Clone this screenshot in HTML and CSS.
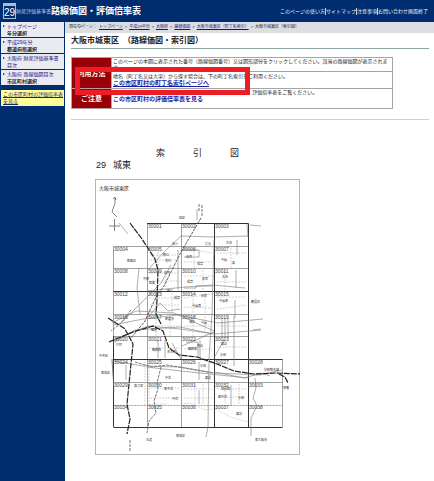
FILE: index.html
```html
<!DOCTYPE html>
<html lang="ja">
<head>
<meta charset="utf-8">
<meta name="viewport" content="width=device-width, initial-scale=1">
<title>大阪市城東区（路線価図・索引図）</title>
<link rel="stylesheet" href="styles.css">
</head>
<body>
<header class="top">
  <div class="brand">
    <span class="year">29</span>
    <span class="series">財産評価基準書</span>
    <span class="name">路線価図・評価倍率表</span>
  </div>
  <nav class="tools">
    <a href="#">このページの使い方</a>
    <a href="#">サイトマップ</a>
    <a href="#">注意事項</a>
    <a href="#">お問い合わせ</a>
    <a href="#">画面終了</a>
  </nav>
</header>
<div class="body">
  <aside class="side">
    <ul class="menu">
      <li><a href="#">トップページ</a><b>年分選択</b></li>
      <li><a href="#">平成29年分</a><b>都道府県選択</b></li>
      <li><a href="#">大阪府 財産評価基準書目次</a></li>
      <li><a href="#">大阪府 路線価図目次</a><b>市区町村選択</b></li>
    </ul>
    <a class="ratio" href="#">この市区町村の評価倍率表を見る</a>
  </aside>
  <main class="main">
    <nav class="crumbs">
      <span>現在のページ：</span>
      <a href="#">トップページ</a><span>&gt;</span>
      <a href="#">平成29年分</a><span>&gt;</span>
      <a href="#">大阪府</a><span>&gt;</span>
      <a href="#">路線価図</a><span>&gt;</span>
      <a href="#">大阪市城東区（町丁名索引）</a><span>&gt;</span>
      <span>大阪市城東区（索引図）</span>
    </nav>
    <div class="content">
      <h1>大阪市城東区　（路線価図・索引図）</h1>
      <div class="guide">
        <table>
          <tr class="how">
            <th rowspan="2">利用方法</th>
            <td>このページの本図に表示された番号（路線価図番号）又は図形部分をクリックしてください。該当の路線価図が表示されます。</td>
          </tr>
          <tr class="find">
            <td>地名（町丁名又は大字）から探す場合は、下の町丁名索引をご利用ください。<a href="#">この市区町村の町丁名索引ページへ</a></td>
          </tr>
          <tr class="note">
            <th>ご注意</th>
            <td>倍率地域については、路線価図には表示されていませんので、評価倍率表をご覧ください。<a class="plain" href="#">この市区町村の評価倍率表を見る</a></td>
          </tr>
        </table>
        <div class="marker"></div>
      </div>
      <hr>
      <section class="index">
        <h2><span>索</span><span>引</span><span>図</span></h2>
        <h3><span>29</span><span>城東</span></h3>
        <svg class="map" viewBox="95 179 205 276" role="img" aria-label="大阪市城東区 索引図">
          <rect class="frame" x="95.500" y="179.500" width="204" height="275"/>
          <text class="ward" x="99" y="190">大阪市城東区</text>
          <path class="ink" d="M115 198v5l-3 9 5 5M113 199l2-2 1 3M109 226h11M114.500 219v12"/>

          <g class="grid">
            <path d="M147.500 223.500V427M181.500 223.500V427M214.500 223.500V427M113.500 246.500V427M113.500 246.500h135M113.500 268.500h135M113.500 314.500h135M113.500 336.500h135M113.500 382.500h169M282.500 359.500V427"/>
            <path class="dash" d="M113.500 405.500h169"/>
          </g>
          <path class="edge" d="M147 223.500h101.500V427M113.500 291.500h135M113.500 359.500h169M113.500 427.500h169M214.500 223.500V427M113.500 336V427"/>

          <g class="road">
            <path d="M197 209v11M119 223l9 11M147 271l17-19 17-16 33 1 34-1M178 250v40M214 240l-2 74-3 45-1 68-2 10M237 240v15M236 270v18M235 300v18M234 316v50M147 291l38-4 28-2 32 3M113 325l30-6 35-4 40 8 45-4M110 341l38-15 32 3 35 5 46-4M113 361l30 5 38 1 34 6 45 2 22-5M147 367l34 4 67 7M121 323l12-12 28-28 10-18M139 268l-2 20 3 26M148 317l12-14 8 8 12-2M113 375l-1-16 2 33M165 340v18M172 343l9 16M224 340l-10 18M182 346l32-14M253 330l8-1M250 225l11 1M248 237l-1-13"/>
            <path d="M112 323l24-12 38 2 40 18M113 343l22-13 45-3 33 7M214 372l30 6 18-5 8 3M255 378l1 10-3 10 4 8-6 12v18"/>
            <path d="M183 250h16v7h-15M184 288h12v-2h17M186 342h12v16M200 340v18M126 365v15M158 340v18M199 362v18M199 390v14M231 385v21M222 318v20M225 318v20M228 318v20"/>
          </g>
          <path class="walk" d="M150 255h28M150 260h27M150 273h28M152 281h28M149 298h31M150 305h30M152 326h28M149 348h31M184 248l28 5M184 262h28M184 276h28M184 298l28-4M184 307l28 1M184 326h28M184 349h28M217 253h29M217 282h29M217 297h28M217 309l30-4M217 326h29M217 347h30M150 388h29M150 398h29M184 389h28M184 398h28M217 389h30M217 397h28M158 252v15M166 270v20M156 293v20M172 293v20M194 248v20M203 270v20M193 293v20M205 293v20M156 316v20M170 316v20M193 316v20M205 316v20M231 248v20M225 270v20M145 361v44M149 361v44M195 384v20M203 384v20M225 384v20M239 384v20M181 404l10-1 14 7 10-1 18 9 15 4M148 405l8-1 11 0"/>

          <g class="rail">
            <path d="M130 223l12 16 13 20 3 11-1 30-1 14 5 10"/>
            <path d="M108 318l17 11 8 15-2 20-2 20-2 20 3 15-3 15"/>
            <path d="M109 342l24-10 20-6 10 5 6 17 10 7 18 2 20 7 17 7 20 3 22-1 25 1 18-2"/>
            <path d="M279 374l6 3 3 6"/>
          </g>
          <path class="diagonal" d="M201 218l-20 34-17 34-7 9-12 26-14 17"/>
          <path class="river" d="M135 362l17 5 15-2 28 5 18 3M161 367l-4 16 1 6-4 12 2 12-7 8-2 12M199 211v-8M202 205v12M130 440v12M131 310l-10 13-10 8"/>

          <g class="cell">
            <text x="148" y="228">30001</text><text x="182" y="228">30002</text><text x="215" y="228">30003</text>
            <text x="114" y="251">30004</text><text x="148" y="251">30005</text><text x="182" y="251">30006</text><text x="215" y="251">30007</text>
            <text x="114" y="273">30008</text><text x="148" y="273">30009</text><text x="182" y="273">30010</text><text x="215" y="273">30011</text>
            <text x="114" y="296">30012</text><text x="148" y="296">30013</text><text x="182" y="296">30014</text><text x="215" y="296">30015</text>
            <text x="114" y="319">30016</text><text x="148" y="319">30017</text><text x="182" y="319">30018</text><text x="215" y="319">30019</text>
            <text x="114" y="341">30020</text><text x="148" y="341">30021</text><text x="182" y="341">30022</text><text x="215" y="341">30023</text>
            <text x="114" y="364">30024</text><text x="148" y="364">30025</text><text x="182" y="364">30026</text><text x="215" y="364">30027</text><text x="249" y="364">30028</text>
            <text x="114" y="387">30029</text><text x="148" y="387">30030</text><text x="182" y="387">30031</text><text x="215" y="387">30032</text><text x="249" y="387">30033</text>
            <text x="114" y="409">30034</text><text x="148" y="409">30035</text><text x="182" y="409">30036</text><text x="215" y="409">30037</text><text x="249" y="409">30038</text>
          </g>
          <g class="place">
            <text x="179" y="219">旭区</text><text x="127" y="262">都島区</text><text x="251" y="303">鶴見区</text>
            <text x="99" y="357">中央区</text><text x="101" y="374">東成区</text><text x="116" y="346">片町</text>
            <text x="176" y="437">東成区</text><text x="255" y="441">東大阪市</text><text x="146" y="441">玉造</text>
            <text x="264" y="371">学研都市線</text><text x="283" y="389">徳庵</text>
            <text x="172" y="245">赤川</text><text x="163" y="256">野江</text><text x="165" y="262">内代</text><text x="186" y="258">関目</text><text x="197" y="265">成育</text>
            <text x="226" y="244">古市</text><text x="205" y="245">清水</text><text x="221" y="261">今福</text><text x="232" y="264">森</text><text x="143" y="280">中野</text><text x="149" y="284">都島</text><text x="164" y="274">関目</text><text x="187" y="283">成育</text><text x="202" y="280">関目</text>
            <text x="222" y="278">古市</text><text x="167" y="292">野江</text><text x="174" y="299">成育</text><text x="192" y="307">今福西</text><text x="219" y="302">今福東</text><text x="201" y="297">関目</text><text x="165" y="320">新喜多</text><text x="189" y="323">蒲生</text><text x="201" y="324">今福</text>
            <text x="151" y="331">鴫野</text><text x="152" y="351">鴫野西</text><text x="167" y="353">天王田</text><text x="188" y="350">鴫野東</text><text x="197" y="347">放出</text><text x="221" y="345">諏訪</text><text x="220" y="356">永田</text>
            <text x="134" y="387">森之宮</text><text x="165" y="379">中浜</text><text x="164" y="390">東中浜</text><text x="172" y="400">中浜</text><text x="200" y="367">永田</text><text x="205" y="379">諏訪</text><text x="218" y="398">東中浜</text><text x="238" y="399">永田</text><text x="236" y="415">諏訪</text><text x="221" y="390">放出西</text>
          </g>
        </svg>
      </section>
    </div>
  </main>
</div>
</body>
</html>
```
FILE: styles.css
```css
* { box-sizing: border-box; }

body {
  display: flex;
  flex-direction: column;
  min-height: 100vh;
  margin: 0;
  background: #fff;
  color: #222;
  font-family: "Liberation Sans", "Noto Sans CJK JP", sans-serif;
  font-size: 5px;
  line-height: 7px;
}

a { color: #14148c; }

.top {
  display: flex;
  align-items: center;
  justify-content: space-between;
  height: 22px;
  padding: 0 6px 0 3px;
  background: #002c70;
  color: #fff;
}

.brand { display: flex; align-items: center; }

.year {
  width: 13px;
  height: 16px;
  border: 1px solid #a9bbd8;
  border-top-width: 3px;
  font-size: 10px;
  line-height: 13px;
  text-align: center;
}

.series { color: #b9c8e2; }

.name { font-size: 9px; font-weight: bold; line-height: 12px; }

.tools { display: flex; }

.tools a {
  border-left: 1px solid #c5d0e4;
  color: #e6ecf7;
  text-decoration: none;
}

.tools a:first-child,
.tools a:last-child { border-left: 0; }

.body { display: flex; flex: 1; }

.side {
  flex: none;
  width: 65px;
  padding: 0 1px;
  background: #002c70;
}

.menu {
  display: grid;
  gap: 1px;
  margin: 0 0 5px;
  padding: 0;
  list-style: none;
}

.menu li {
  position: relative;
  height: 15px;
  padding: 1px 1px 0 6px;
  background: #e9ebf1;
}

.menu li::before {
  content: "";
  position: absolute;
  top: 3px;
  left: 2px;
  border: 1px solid transparent;
  border-left: 2px solid #14148c;
}

.menu a { display: block; text-decoration: none; }

.menu b { display: block; }

.ratio {
  display: block;
  height: 16px;
  padding: 1px 0 1px 2px;
  background: #ffff99;
  color: #222266;
}

.main { flex: 1; min-width: 0; }

.crumbs {
  display: flex;
  gap: 2px;
  height: 11px;
  padding: 0 4px;
  background: #dcdee2;
  font-size: 4px;
  line-height: 10px;
  white-space: nowrap;
}

.content { padding: 0 5px 0 6px; }

h1 {
  margin: 0;
  padding: 3px 0 2px;
  border-bottom: 1px solid #8fa5a2;
  font-size: 8px;
  line-height: 10px;
}

.guide {
  position: relative;
  width: 90%;
  margin-top: 8px;
}

table {
  width: 100%;
  border-collapse: collapse;
}

th {
  width: 40px;
  padding: 0;
  border: 1px solid #b9a0a0;
  background: #980007;
  color: #fff;
  font-size: 7px;
}

td {
  padding: 0 0 0 1px;
  border: 1px solid #a5a5a5;
  vertical-align: top;
}

.how td { height: 14px; line-height: 6px; }

.find td { height: 17px; padding-top: 1px; }

.note td { height: 20px; }

td a {
  display: block;
  color: #1a1aa0;
  font-size: 6px;
  font-weight: bold;
}

.plain { text-decoration: none; }

.marker {
  position: absolute;
  top: 10px;
  left: 4px;
  width: 175px;
  height: 28px;
  border: 5px solid #ee1c25;
}

hr {
  margin: 10px 0 0;
  border: 0;
  border-top: 1px solid #d0d0d0;
}

.index { padding: 27px 0 0 24px; }

h2, h3 {
  display: flex;
  margin: 0;
  font-size: 9px;
  font-weight: normal;
  line-height: 12px;
}

h2 { gap: 28px; padding-left: 61px; }

h3 { gap: 7px; padding-left: 1px; }

h3 { margin-bottom: 8px; }

.map {
  display: block;
  width: 205px;
  max-width: 100%;
  height: auto;
}

.map path { fill: none; }

.frame { fill: #fff; stroke: #b5b5b5; }

.ward { font-size: 5px; fill: #222; }

.ink { stroke: #333; stroke-width: 0.6; }

.grid { stroke: #777; stroke-width: 0.7; }

.dash { stroke-dasharray: 2 1; }

.edge { stroke: #333; stroke-width: 1; }

.road { stroke: #777; stroke-width: 0.6; }

.walk { stroke: #aaa; stroke-width: 0.5; stroke-dasharray: 2 1; }

.rail { stroke: #222; stroke-width: 1.2; stroke-dasharray: 6 1; }

.diagonal { stroke: #333; stroke-width: 0.8; stroke-dasharray: 3 1; }

.river { stroke: #777; stroke-width: 1; stroke-dasharray: 3 1; }

.cell { font-size: 5px; fill: #444; }

.place { font-size: 3px; fill: #333; }
```
